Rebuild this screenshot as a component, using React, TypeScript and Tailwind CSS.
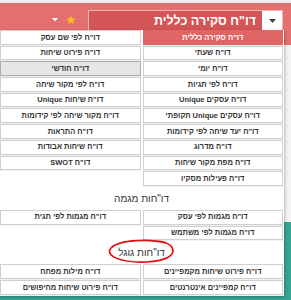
import React from "react";

const main: [string, string][] = [
  ['דו"ח סקירה כללית', 'דו"ח לפי שם עסק'],
  ['דו"ח שעתי', 'דו"ח פירוט שיחות'],
  ['דו"ח יומי', 'דו"ח חודשי'],
  ['דו"ח לפי תגיות', 'דו"ח לפי מקור שיחה'],
  ['דו"ח עסקים Unique', 'דו"ח שיחות Unique'],
  ['דו"ח עסקים Unique תקופתי', 'דו"ח מקור שיחה לפי קידומות'],
  ['דו"ח יעד שיחה לפי קידומות', 'דו"ח התראות'],
  ['דו"ח מדרוג', 'דו"ח שיחות אבודות'],
  ['דו"ח מפת מקור שיחות', 'דו"ח SWOT'],
  ['דו"ח פעילות מסקיו', ''],
];
const trends: [string, string][] = [
  ['דו"ח מגמות לפי עסק', 'דו"ח מגמות לפי תגית'],
  ['דו"ח מגמות לפי משתמש', ''],
];
const google: [string, string][] = [
  ['דו"ח פירוט שיחות מקמפיינים', 'דו"ח מילות מפתח'],
  ['דו"ח קמפיינים אינטרנטים', 'דו"ח פירוט שיחות מחיפושים'],
];

function Btn({ label, active, hover }: { label: string; active?: boolean; hover?: boolean }) {
  if (!label) return <div className="h-[14.7px]" />;
  const cls = active
    ? "bg-[#e06666] border-[#e06666] text-white"
    : hover
    ? "bg-[#e6e6e6] border-[#adadad] text-[#333]"
    : "bg-white border-[#cfcfcf] text-[#333]";
  return (
    <div
      className={`h-[14.7px] border flex items-center justify-center text-[7.5px] font-bold leading-none whitespace-nowrap shadow-[0_1px_0_rgba(0,0,0,0.06)] ${cls}`}
    >
      {label}
    </div>
  );
}

function Grid({ rows, first }: { rows: [string, string][]; first?: boolean }) {
  return (
    <div className="grid grid-cols-2 gap-x-[2px] gap-y-[1px]">
      {rows.map((r, i) => (
        <React.Fragment key={i}>
          <Btn label={r[0]} active={first && i === 0} />
          <Btn label={r[1]} hover={first && i === 2} />
        </React.Fragment>
      ))}
    </div>
  );
}

function Heading({ text }: { text: string }) {
  return (
    <div className="h-[24px] flex items-center justify-center text-[10px] text-[#333] pt-[1px]">{text}</div>
  );
}

export default function App() {
  return (
    <div
      dir="rtl"
      className="relative w-[291px] h-[300px] overflow-hidden bg-white"
      style={{ fontFamily: '"Liberation Sans", "DejaVu Sans", Arial, sans-serif' }}
    >
      <div className="h-[3px] bg-[#f7eaea]" />
      <div className="h-[42px] bg-[#e46f6f] flex items-start pt-[7px] pr-[8px]">
        <div className="w-[195px] h-[21px] flex border border-[#f3b3b3] border-b-0">
          <div className="w-[20px] bg-white flex items-center justify-center">
            <svg width="7" height="4" viewBox="0 0 7 4">
              <path d="M0 0 L7 0 L3.5 4 Z" fill="#444" />
            </svg>
          </div>
          <div className="flex-1 bg-[#d45555] text-white text-[12.5px] font-bold flex items-center pr-[6px] leading-none">
            דו"ח סקירה כללית
          </div>
        </div>
        <div className="flex items-center gap-[8px] mr-[12px] mt-[5px]">
          <svg width="10" height="10" viewBox="0 0 24 24">
            <path d="M12 1.5l3.1 6.9 7.4.7-5.6 5 1.7 7.4L12 17.6l-6.6 3.9 1.7-7.4-5.6-5 7.4-.7z" fill="#f6c21c" />
          </svg>
          <svg width="6" height="4" viewBox="0 0 6 4">
            <path d="M0 0 L6 0 L3 3.5 Z" fill="#fff" />
          </svg>
        </div>
      </div>
      <div className="h-[177px] bg-[#f4f4f4]" />
      <div className="h-[78px] bg-[#36a596]" />

      <div className="absolute top-[30px] right-[7px] w-[286px] bg-white shadow-[1px_1px_3px_rgba(0,0,0,0.25)] pb-[1px]">
        <div className="pr-[1px] pl-[2px]">
          <Grid rows={main} first />
          <Heading text={'דו"חות מגמה'} />
          <Grid rows={trends} />
          <Heading text={'דו"חות גוגל'} />
          <Grid rows={google} />
        </div>
      </div>

      <svg className="absolute left-[104px] top-[237px]" width="76" height="30" viewBox="0 0 76 30">
        <path
          d="M62 6 C48 2, 16 2, 7 11 C0 19, 18 26, 42 25 C62 24, 74 18, 67 9 C63 5, 56 4, 50 4"
          fill="none"
          stroke="#e01010"
          strokeWidth="1.6"
          strokeLinecap="round"
        />
      </svg>
    </div>
  );
}
